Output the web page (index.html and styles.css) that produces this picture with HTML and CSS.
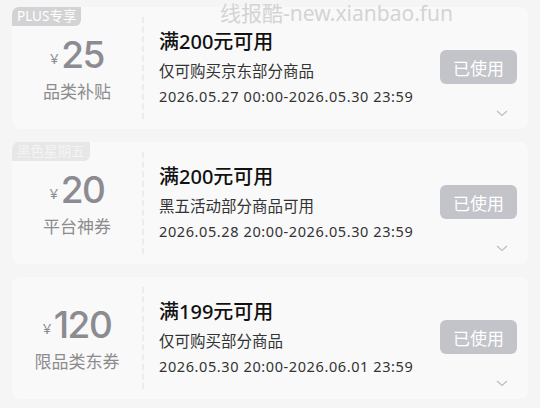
FILE: index.html
```html
<!DOCTYPE html>
<html lang="zh-CN">
<head>
    <meta charset="UTF-8">
    <title>优惠券</title>
    <link rel="stylesheet" href="styles.css">
</head>
<body>
    <div class="watermark">线报酷-new.xianbao.fun</div>

    <div class="coupon-list">
        <div class="coupon">
            <span class="tag">PLUS专享</span>
            <div class="coupon-left">
                <div class="amount"><span class="yen">¥</span>25</div>
                <div class="label">品类补贴</div>
            </div>
            <div class="coupon-right">
                <div class="info">
                    <div class="title">满200元可用</div>
                    <div class="desc">仅可购买京东部分商品</div>
                    <div class="date">2026.05.27 00:00-2026.05.30 23:59</div>
                </div>
                <div class="action">
                    <button class="used-btn">已使用</button>
                </div>
            </div>
            <svg class="chevron" width="12" height="7" viewBox="0 0 12 7"><polyline points="1,1 6,5.5 11,1" fill="none" stroke="#bdbdc1" stroke-width="1.2"/></svg>
        </div>

        <div class="coupon">
            <span class="tag tag-light">黑色星期五</span>
            <div class="coupon-left">
                <div class="amount"><span class="yen">¥</span>20</div>
                <div class="label">平台神券</div>
            </div>
            <div class="coupon-right">
                <div class="info">
                    <div class="title">满200元可用</div>
                    <div class="desc">黑五活动部分商品可用</div>
                    <div class="date">2026.05.28 20:00-2026.05.30 23:59</div>
                </div>
                <div class="action">
                    <button class="used-btn">已使用</button>
                </div>
            </div>
            <svg class="chevron" width="12" height="7" viewBox="0 0 12 7"><polyline points="1,1 6,5.5 11,1" fill="none" stroke="#bdbdc1" stroke-width="1.2"/></svg>
        </div>

        <div class="coupon">
            <div class="coupon-left">
                <div class="amount"><span class="yen">¥</span>120</div>
                <div class="label">限品类东券</div>
            </div>
            <div class="coupon-right">
                <div class="info">
                    <div class="title">满199元可用</div>
                    <div class="desc">仅可购买部分商品</div>
                    <div class="date">2026.05.30 20:00-2026.06.01 23:59</div>
                </div>
                <div class="action">
                    <button class="used-btn">已使用</button>
                </div>
            </div>
            <svg class="chevron" width="12" height="7" viewBox="0 0 12 7"><polyline points="1,1 6,5.5 11,1" fill="none" stroke="#bdbdc1" stroke-width="1.2"/></svg>
        </div>
    </div>
</body>
</html>
```

FILE: styles.css
```css
* { box-sizing: border-box; margin: 0; padding: 0; }

body {
    font-family: "Noto Sans", "Noto Sans CJK SC", sans-serif;
    background: #f5f5f5;
    color: #222;
    width: 540px;
    height: 408px;
    overflow: hidden;
    position: relative;
}

.watermark {
    position: absolute;
    top: -1px;
    left: 220px;
    font-size: 21px;
    line-height: 28px;
    color: #d4d4d4;
    z-index: 2;
}

.coupon-list {
    display: flex;
    flex-direction: column;
    gap: 13px;
    padding: 7px 12px 0 12px;
}

.coupon {
    position: relative;
    display: flex;
    height: 122px;
    flex-shrink: 0;
    background: #f9f9f9;
    border-radius: 8px;
}

.tag {
    position: absolute;
    top: 0;
    left: 0;
    height: 19px;
    padding: 0 5px;
    font-size: 13.5px;
    line-height: 19px;
    color: #fff;
    background: #d3d3d5;
    border-radius: 7px 0 6px 0;
}

.tag-light {
    background: #e7e7e8;
    color: #f4f4f4;
}

.coupon-left {
    width: 130px;
    display: flex;
    flex-direction: column;
    align-items: center;
    justify-content: center;
    padding-top: 1px;
    gap: 3px;
}

.coupon-right {
    flex: 1;
    display: flex;
    border-left: 2px dashed #ececec;
    margin: 10px 0;
    padding-left: 15px;
}

.amount {
    font-family: "Inter", "Noto Sans", sans-serif;
    font-size: 37px;
    line-height: 40px;
    font-weight: 500;
    color: #8b8b91;
    letter-spacing: -1.5px;
}

.yen {
    font-family: "Noto Sans", sans-serif;
    font-size: 15px;
    font-weight: 400;
    margin-right: 4px;
    vertical-align: 4px;
}

.label {
    font-size: 17px;
    line-height: 22px;
    color: #8c8c8e;
}

.info {
    flex: 1;
    padding-top: 12px;
}

.title {
    font-size: 20px;
    line-height: 26px;
    font-weight: 500;
    color: #111;
}

.desc {
    margin-top: 5px;
    font-size: 15.5px;
    line-height: 22px;
    color: #333;
}

.date {
    margin-top: 3px;
    font-size: 14.5px;
    line-height: 22px;
    letter-spacing: 0.6px;
    color: #333;
}

.action {
    display: flex;
    align-items: center;
    padding-right: 11px;
    padding-bottom: 2px;
}

.used-btn {
    width: 77px;
    height: 34px;
    border: none;
    border-radius: 6px;
    background: #c3c3ca;
    color: #fff;
    font-family: inherit;
    font-size: 17px;
}

.chevron {
    position: absolute;
    right: 20px;
    bottom: 12px;
}
```
